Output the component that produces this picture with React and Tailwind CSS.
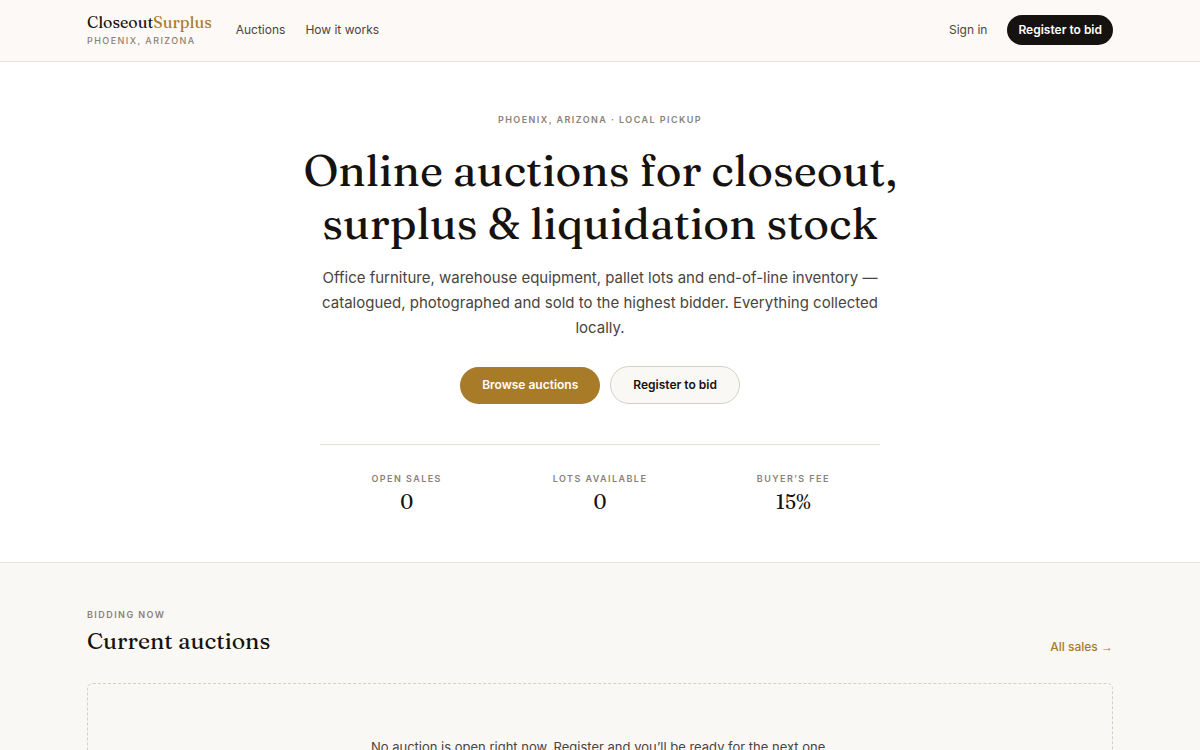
const stats = [
  { label: 'Open sales', value: '0' },
  { label: 'Lots available', value: '0' },
  { label: 'Buyer’s fee', value: '15%' },
];

function Header() {
  return (
    <header className="border-b border-[#e8e3dc] bg-[#fdf9f6]">
      <div className="mx-auto flex h-[61px] max-w-[1074px] items-center justify-between px-6 pb-px">
        <div className="flex items-center gap-6">
          <a href="#" className="flex flex-col gap-[3px] pb-0.5">
            <span className="font-[Fraunces,'Liberation_Serif',serif] text-base leading-5">
              Closeout<span className="text-[#a87b28]">Surplus</span>
            </span>
            <span className="text-[9px] leading-3 font-medium tracking-[0.16em] text-[#8a8178] uppercase">Phoenix, Arizona</span>
          </a>
          <nav className="flex gap-5 text-xs text-[#4a443e]">
            <a href="#auctions">Auctions</a>
            <a href="#how">How it works</a>
          </nav>
        </div>
        <div className="flex items-center gap-5 text-xs">
          <a href="#signin" className="text-[#4a443e]">Sign in</a>
          <button type="button" className="h-[30px] rounded-full bg-[#15120f] px-[11px] font-semibold text-white">Register to bid</button>
        </div>
      </div>
    </header>
  );
}

function Hero() {
  return (
    <section className="border-b border-[#e5e1da] bg-white px-6 pt-[50px] pb-[46px] text-center">
      <p className="text-[9px] leading-4 font-semibold tracking-[0.16em] text-[#8a8178] uppercase">Phoenix, Arizona · Local pickup</p>
      <h1 className="mt-4 font-[Fraunces,'Liberation_Serif',serif] text-[44px] leading-[53px]">
        Online auctions for closeout,
        <br />
        surplus &amp; liquidation stock
      </h1>
      <p className="mx-auto mt-[15px] max-w-[560px] text-[15px] leading-[25px] text-[#4a443e]">
        Office furniture, warehouse equipment, pallet lots and end-of-line inventory — catalogued, photographed and sold to the highest bidder. Everything collected locally.
      </p>
      <div className="mt-[26px] flex items-center justify-center gap-[10px] text-xs font-semibold">
        <button type="button" className="h-[37px] rounded-full bg-[#a87b28] px-[22px] text-white">Browse auctions</button>
        <button type="button" className="h-[38px] rounded-full border border-[#d5d0c5] bg-[#faf8f4] px-[22px]">Register to bid</button>
      </div>
      <dl className="mx-auto mt-10 grid max-w-[560px] grid-cols-3 gap-5 border-t border-[#e5e1da] pt-7">
        {stats.map((s) => (
          <div key={s.label}>
            <dt className="text-[9px] leading-3 font-semibold tracking-[0.16em] text-[#8a8178] uppercase">{s.label}</dt>
            <dd className="mt-[3px] font-[Fraunces,'Liberation_Serif',serif] text-xl leading-7">{s.value}</dd>
          </div>
        ))}
      </dl>
    </section>
  );
}

export default function App() {
  return (
    <div className="min-h-screen bg-[#faf8f4] font-[Inter,sans-serif] text-[#15120f]">
      <Header />
      <main>
        <Hero />
        <section id="auctions" className="mx-auto max-w-[1074px] px-6 pt-11">
          <div className="flex items-end justify-between">
            <div>
              <p className="text-[9px] leading-4 font-semibold tracking-[0.16em] text-[#8a8178] uppercase">Bidding now</p>
              <h2 className="font-[Fraunces,'Liberation_Serif',serif] text-[23px] leading-9">Current auctions</h2>
            </div>
            <a href="#all" className="pb-0.5 text-xs leading-5 font-medium text-[#a87b28]">
              All sales <span className="font-['Liberation_Serif',serif]">→</span>
            </a>
          </div>
          <div className="mt-6 rounded-md border border-dashed border-[#d5d0c5] px-6 py-[53px] text-center text-[13px] leading-5 text-[#4a443e]">
            No auction is open right now. Register and you’ll be ready for the next one.
          </div>
        </section>
      </main>
    </div>
  );
}
